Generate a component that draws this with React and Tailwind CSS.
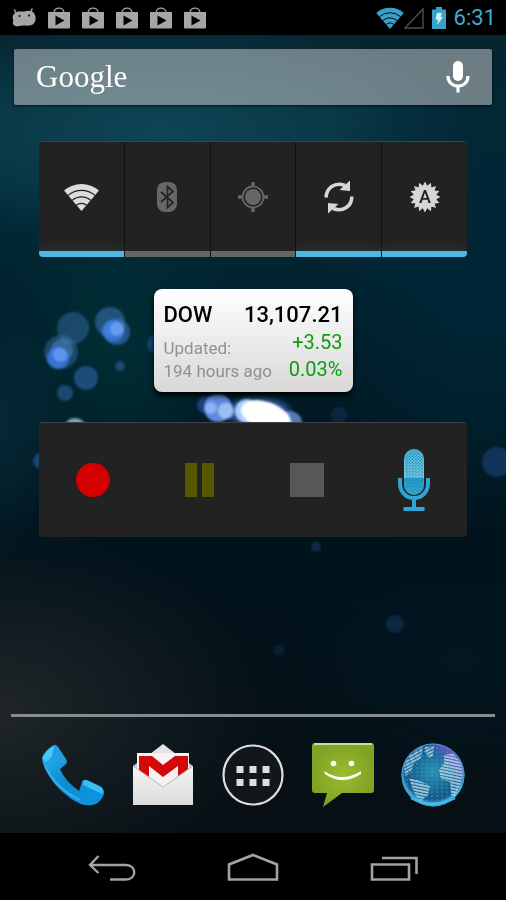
import React, { useState } from "react";

const bokeh = [
  { x: 73, y: 328, r: 16, fill: "#3f77b8", o: 0.42 },
  { x: 61, y: 352, r: 17, fill: "#4a7fbf", o: 0.38 },
  { x: 62, y: 350, r: 11, fill: "#5f9ae8", o: 0.4 },
  { x: 58, y: 358, r: 11, fill: "#3f86ff", o: 0.7 },
  { x: 60, y: 355, r: 7, fill: "#7db0ff", o: 0.5 },
  { x: 110, y: 322, r: 15, fill: "#3e73ba", o: 0.55 },
  { x: 117, y: 332, r: 13, fill: "#4a8af0", o: 0.45 },
  { x: 113, y: 331, r: 11, fill: "#4a8cff", o: 0.6 },
  { x: 117, y: 329, r: 7, fill: "#8abaff", o: 0.5 },
  { x: 86, y: 378, r: 12, fill: "#2f66ae", o: 0.6 },
  { x: 65, y: 393, r: 8, fill: "#2f66a8", o: 0.55 },
  { x: 120, y: 366, r: 5, fill: "#3a6ba5", o: 0.5 },
  { x: 75, y: 429, r: 11, fill: "#9fd0e8", o: 0.75 },
  { x: 41, y: 461, r: 8, fill: "#2a5f9c", o: 0.6 },
  { x: 157, y: 344, r: 10, fill: "#20509c", o: 0.6 },
  { x: 206, y: 405, r: 9, fill: "#4b83ff", o: 0.35 },
  { x: 218, y: 408, r: 14, fill: "#6c9cff", o: 0.85 },
  { x: 211, y: 408, r: 6, fill: "#a9c9ff", o: 0.6 },
  { x: 226, y: 411, r: 8, fill: "#b5d6ff", o: 0.7 },
  { x: 290, y: 423, r: 12, fill: "#7a9cf0", o: 0.7 },
  { x: 339, y: 415, r: 8, fill: "#1f3f7c", o: 0.35 },
  { x: 497, y: 462, r: 15, fill: "#1d4b8c", o: 0.5 },
  { x: 316, y: 547, r: 5, fill: "#27508c", o: 0.4 },
  { x: 395, y: 624, r: 9, fill: "#1e4d80", o: 0.35 },
  { x: 279, y: 650, r: 6, fill: "#1b3b60", o: 0.3 },
];

const Wallpaper = () => (
  <svg
    className="absolute inset-0 h-full w-full"
    viewBox="0 35 506 798"
    preserveAspectRatio="xMidYMid slice"
    aria-hidden="true"
  >
    <defs>
      <linearGradient id="sky" x1="0" y1="0" x2="0" y2="1">
        <stop offset="0" stopColor="#062530" />
        <stop offset="0.2" stopColor="#022a38" />
        <stop offset="0.4" stopColor="#001d29" />
        <stop offset="0.65" stopColor="#00121b" />
        <stop offset="1" stopColor="#080f14" />
      </linearGradient>
      <radialGradient id="teal">
        <stop offset="0" stopColor="#0f4555" />
        <stop offset="0.5" stopColor="#0d4252" stopOpacity="0.65" />
        <stop offset="1" stopColor="#0d4252" stopOpacity="0" />
      </radialGradient>
      <radialGradient id="green">
        <stop offset="0" stopColor="#003036" stopOpacity="0.9" />
        <stop offset="1" stopColor="#003036" stopOpacity="0" />
      </radialGradient>
      <radialGradient id="smoke">
        <stop offset="0" stopColor="#202629" />
        <stop offset="1" stopColor="#1c2327" stopOpacity="0" />
      </radialGradient>
      <radialGradient id="navy">
        <stop offset="0" stopColor="#002636" />
        <stop offset="1" stopColor="#002636" stopOpacity="0" />
      </radialGradient>
      <filter id="soft">
        <feGaussianBlur stdDeviation="1" />
      </filter>
      <filter id="glow" x="-50%" y="-50%" width="200%" height="200%">
        <feGaussianBlur stdDeviation="3" />
      </filter>
    </defs>
    <rect y="35" width="506" height="798" fill="url(#sky)" />
    <ellipse cx="160" cy="130" rx="340" ry="110" fill="url(#teal)" />
    <ellipse cx="120" cy="340" rx="120" ry="170" fill="url(#green)" />
    <ellipse cx="480" cy="280" rx="170" ry="260" fill="url(#navy)" />
    <ellipse cx="0" cy="430" rx="70" ry="130" fill="url(#teal)" opacity="0.35" />
    <ellipse cx="0" cy="710" rx="280" ry="190" fill="url(#smoke)" />
    <ellipse cx="460" cy="660" rx="200" ry="140" fill="url(#navy)" opacity="0.3" />
    <ellipse cx="258" cy="412" rx="32" ry="14" fill="#5b8bff" opacity="0.55" filter="url(#glow)" />
    <g filter="url(#soft)">
      {bokeh.map((b, i) => (
        <circle key={i} cx={b.x} cy={b.y} r={b.r} fill={b.fill} opacity={b.o} />
      ))}
      <circle cx="247" cy="411" r="12" fill="#a3d0ff" />
      <ellipse cx="266" cy="416" rx="26" ry="14" fill="#fff" transform="rotate(20 266 416)" />
    </g>
  </svg>
);

const WifiIcon = ({ className, gap }) => (
  <svg viewBox="0 0 35 28" className={className}>
    <path d="M17.500 28 0 7.500A27 27 0 0 1 35 7.500Z" fill="currentColor" />
    <g fill="none" stroke={gap} strokeWidth="1.200">
      <path d="M4 12.400A20.500 20.500 0 0 1 31 12.400" />
      <path d="M8.200 17.400A14 14 0 0 1 26.800 17.400" />
      <path d="M12.400 22.300A7.500 7.500 0 0 1 22.600 22.300" />
    </g>
  </svg>
);

const BluetoothIcon = () => (
  <svg viewBox="0 0 20 30" className="h-[30px] w-5">
    <rect width="20" height="30" rx="8" fill="#666" />
    <path
      d="M4 10 16 20.500 10.500 25.500V4.500L16 9.500 4 20"
      fill="none"
      stroke="#222"
      strokeWidth="1.700"
    />
  </svg>
);

const GpsIcon = () => (
  <svg viewBox="0 0 30 30" className="h-[30px] w-[30px]">
    <circle cx="15" cy="15" r="8" fill="#666" />
    <circle cx="15" cy="15" r="10.500" fill="none" stroke="#666" strokeWidth="1.800" />
    <path d="M15 0v5M15 25v5M0 15h5M25 15h5" stroke="#666" strokeWidth="3.500" />
  </svg>
);

const SyncIcon = () => (
  <svg viewBox="0 0 30 34" className="h-[34px] w-[30px]">
    <g fill="none" stroke="#d6d6d6" strokeWidth="3.600">
      <path d="M2.200 17.500C2 8 11 1.500 21 5.500" />
      <path d="M27.800 16.500C28 26 19 32.500 9 28.500" />
    </g>
    <path d="M26 .5V11L15.500 10Z" fill="#d6d6d6" />
    <path d="M4 33.500V23L14.500 24Z" fill="#d6d6d6" />
  </svg>
);

// 16-pointed star used behind the auto brightness letter
const starPoints = Array.from({ length: 32 }, (_, i) => {
  const r = i % 2 ? 11.5 : 15.5;
  const a = (i * Math.PI) / 16;
  return `${(16 + r * Math.sin(a)).toFixed(1)},${(16 - r * Math.cos(a)).toFixed(1)}`;
}).join(" ");

const BrightnessIcon = () => (
  <svg viewBox="0 0 32 32" className="h-8 w-8">
    <polygon points={starPoints} fill="#d6d6d6" />
    <text
      x="16"
      y="22"
      textAnchor="middle"
      fontSize="18"
      fontWeight="500"
      fill="#222"
      className="font-[Roboto,sans-serif]"
    >
      A
    </text>
  </svg>
);

const AndroidIcon = () => (
  <svg viewBox="0 0 24 19" className="h-[19px] w-6">
    <path
      d="M2.500 2 4 5M20 1l-1.500 4"
      stroke="#a6a6a6"
      strokeWidth="1.500"
      strokeLinecap="round"
    />
    <path
      d="M3 5C6 2.500 9 4 12 3.500 16 2.500 21 2 23 7c2 5.500-1 10-5 10.500-4 .5-5-.5-9 .3-3 .9-7 .7-8-1.800-.6-1.500.3-2.500.2-4C0 9.500.6 7 3 5Z"
      fill="#a6a6a6"
    />
    <circle cx="7.500" cy="8" r="1" />
    <circle cx="17" cy="7.500" r="1" />
  </svg>
);

const PlayStoreIcon = () => (
  <svg viewBox="0 0 22 22" className="h-[22px] w-[22px]">
    <path d="M6 6C6-.5 16-.5 16 6" fill="none" stroke="#a6a6a6" strokeWidth="1.300" />
    <path d="M0 5h22v15.500q0 1-1 1H1q-1 0-1-1Z" fill="#a6a6a6" />
    <path d="M7.500 8.500v10l9-5Z" fill="#000" />
  </svg>
);

const BatteryIcon = () => (
  <svg viewBox="0 0 14 22" className="h-[22px] w-[14px]">
    <path d="M0 2.500h4V0h6v2.500h4V22H0Z" fill="#3aa0c8" />
    <path d="M5 6h5l-1.500 4H11L5 18l1-5.500H3.500Z" fill="#d8f0fa" />
  </svg>
);

const MicIcon = () => (
  <svg viewBox="0 0 24 32" className="h-8 w-6">
    <rect x="7" y="0" width="10" height="20" rx="5" fill="#fff" />
    <path
      d="M2 15c0 13.500 20 13.500 20 0M12 25v6.500"
      fill="none"
      stroke="#fff"
      strokeWidth="3.200"
    />
  </svg>
);

const StudioMicIcon = () => (
  <svg viewBox="0 0 32 64" className="h-16 w-8">
    <defs>
      <pattern id="mesh" width="3" height="3" patternUnits="userSpaceOnUse">
        <circle cx="0.800" cy="0.800" r="0.600" fill="#1b6f96" />
        <circle cx="2.300" cy="2.300" r="0.600" fill="#1b6f96" />
      </pattern>
      <linearGradient id="micBody" x1="0" y1="0" x2="0" y2="1">
        <stop offset="0" stopColor="#49b5dc" />
        <stop offset="0.620" stopColor="#74cbe8" />
        <stop offset="0.630" stopColor="#1f9fd0" />
        <stop offset="1" stopColor="#35b0dc" />
      </linearGradient>
    </defs>
    <rect x="6" y="1" width="20" height="46" rx="10" fill="url(#micBody)" />
    <rect x="7" y="2" width="18" height="44" rx="9" fill="url(#mesh)" />
    <path
      d="M2 30v5C2 55 30 55 30 35v-5M16 51v9"
      fill="none"
      stroke="#2ba6d5"
      strokeWidth="4"
    />
    <path d="M5.500 61h21" stroke="#2ba6d5" strokeWidth="4" />
  </svg>
);

const PhoneIcon = () => (
  <svg viewBox="0 0 62 62" className="h-[62px] w-[62px]">
    <defs>
      <linearGradient id="phoneBlue" x1="0" y1="0" x2="1" y2="1">
        <stop offset="0" stopColor="#2fb4f0" />
        <stop offset="0.500" stopColor="#0f8cd2" />
        <stop offset="1" stopColor="#0a97e2" />
      </linearGradient>
    </defs>
    <path
      d="M0 14Q2 7 11 1.500 14 0 16 3L24 15Q26 18 24 20L18 25Q23 37 37 47L40 38Q41 35 45 36L58 42Q63 45 62 50 58 60 50 61 41 63 28 54 10 41 3 24 0 19 0 14Z"
      fill="url(#phoneBlue)"
    />
    <path d="M1 13Q4 7 12 2L14 3Q12 12 4 18Q1 17 1 13Z" fill="#4ac6f8" />
    <path d="M12 2Q14 1 16 4L24 16 20 20 10 12Z" fill="#1f9fe0" />
    <path d="M41 37 44 36 59 43Q62 46 60 50L56 48 41 41Z" fill="#3dbdf4" />
    <path d="M3 22Q13 44 38 56" fill="none" stroke="#2fb0ea" strokeWidth="2" />
  </svg>
);

const GmailIcon = () => (
  <svg viewBox="0 0 60 62" className="h-[62px] w-[60px]">
    <defs>
      <linearGradient id="paper" x1="0" y1="0" x2="0" y2="1">
        <stop offset="0" stopColor="#f4f4f4" />
        <stop offset="1" stopColor="#dcdcdc" />
      </linearGradient>
    </defs>
    <path d="M0 22 4 19H56L60 22V61H0Z" fill="#c9c9c9" />
    <path d="M17 10 30 0 43 10Z" fill="#e2e2e2" />
    <path d="M4 9h52v34H4Z" fill="#f5f3f2" />
    <path d="M6 37V12h13L30 21 42 12h13v25H45V22L30 33 16 22v15Z" fill="#d4090b" />
    <path d="M0 22 30 43 60 22V61H0Z" fill="url(#paper)" />
    <path d="M0 22 30 43 60 22" fill="none" stroke="#b9b9b9" />
  </svg>
);

const AppsIcon = () => (
  <svg viewBox="0 0 62 62" className="h-[62px] w-[62px]">
    <circle cx="31" cy="31" r="29.500" fill="#11171b" stroke="#dedede" strokeWidth="2.200" />
    {[14.5, 27.5, 40.5].map((x) => (
      <g key={x} fill="#dedede">
        <rect x={x} y="22" width="7" height="7" />
        <rect x={x} y="35" width="7" height="7" />
      </g>
    ))}
  </svg>
);

const MessagingIcon = () => (
  <svg viewBox="0 0 62 64" className="h-16 w-[62px]">
    <defs>
      <radialGradient id="lime">
        <stop offset="0" stopColor="#9bbb2f" />
        <stop offset="1" stopColor="#7fa324" />
      </radialGradient>
    </defs>
    <path
      d="M3 0h56q3 0 3 3v44q0 3-3 3H30L11 64l4-14H3q-3 0-3-3V3q0-3 3-3Z"
      fill="url(#lime)"
    />
    <path d="M2 1h58" stroke="#e6f0c4" strokeWidth="1.500" />
    <circle cx="21.500" cy="20.500" r="2.800" fill="#fff" />
    <circle cx="39.500" cy="20.500" r="2.800" fill="#fff" />
    <path d="M12 28Q30 40 49 28V31Q30 43 13 31Z" fill="#fff" />
  </svg>
);

const BrowserIcon = () => (
  <svg viewBox="0 0 64 64" className="h-16 w-16">
    <defs>
      <radialGradient id="ocean" cx="0.500" cy="0.450">
        <stop offset="0" stopColor="#2b8fb4" />
        <stop offset="0.700" stopColor="#16638f" />
        <stop offset="0.900" stopColor="#155a8d" />
        <stop offset="1" stopColor="#3daee0" />
      </radialGradient>
      <linearGradient id="purple" x1="0" y1="1" x2="1" y2="0">
        <stop offset="0.650" stopColor="#8a56d8" stopOpacity="0" />
        <stop offset="0.900" stopColor="#8a56d8" stopOpacity="0.850" />
      </linearGradient>
      <pattern id="sea" width="5" height="4" patternUnits="userSpaceOnUse">
        <path d="M0 1h2" stroke="#64bcd8" strokeWidth="0.800" opacity="0.600" />
      </pattern>
      <pattern
        id="land"
        width="6"
        height="3"
        patternUnits="userSpaceOnUse"
        patternTransform="rotate(12)"
      >
        <path d="M0 1h6" stroke="#d9f3fb" strokeWidth="1.300" />
      </pattern>
      <pattern
        id="landWest"
        width="6"
        height="3"
        patternUnits="userSpaceOnUse"
        patternTransform="rotate(-28)"
      >
        <path d="M0 1h5.500" stroke="#d9f3fb" strokeWidth="1.300" />
      </pattern>
    </defs>
    <circle cx="32" cy="32" r="31.500" fill="url(#ocean)" />
    <circle cx="32" cy="32" r="31" fill="url(#purple)" />
    <circle cx="32" cy="32" r="29" fill="url(#sea)" />
    <path d="M15 7 22 3 20 15 13 20 10 29 4 33 3 22 8 13Z" fill="url(#landWest)" />
    <path d="M24 4 33 3 32 13 28 15 23 8Z" fill="url(#landWest)" />
    <path d="M43 12 52 10 60 20 62 31 59 43 54 53 50 52 49 39 40 36 38 27 43 20Z" fill="url(#land)" />
    <path d="M8 35 19 38 29 43 27 52 20 58 14 52Z" fill="url(#land)" />
    <path d="M10 55Q32 67 54 55" fill="none" stroke="#48bdf0" strokeWidth="2.500" />
    <circle cx="32" cy="32" r="31" fill="none" stroke="#3f9ccf" strokeWidth="1" />
  </svg>
);

const toggles = [
  { label: "Wi-Fi", icon: <WifiIcon className="h-7 w-[35px] text-[#dcdcdc]" gap="#222" />, on: true },
  { label: "Bluetooth", icon: <BluetoothIcon />, on: false },
  { label: "Location", icon: <GpsIcon />, on: false },
  { label: "Sync", icon: <SyncIcon />, on: true },
  { label: "Auto brightness", icon: <BrightnessIcon />, on: true },
];

const recorder = [
  { label: "Record", icon: <span className="h-[34px] w-[34px] rounded-full bg-[#d40000]" /> },
  {
    label: "Pause",
    icon: (
      <span className="flex gap-[5px]">
        <span className="h-[34px] w-3 bg-[#575700]" />
        <span className="h-[34px] w-3 bg-[#575700]" />
      </span>
    ),
  },
  { label: "Stop", icon: <span className="h-[34px] w-[34px] bg-[#575757]" /> },
  { label: "Open recorder", icon: <StudioMicIcon /> },
];

const dock = [
  { label: "Phone", icon: <PhoneIcon /> },
  { label: "Gmail", icon: <GmailIcon /> },
  { label: "Apps", icon: <AppsIcon /> },
  { label: "Messaging", icon: <MessagingIcon /> },
  { label: "Browser", icon: <BrowserIcon /> },
];

const StatusBar = () => (
  <header className="flex h-[35px] items-center justify-between bg-black pr-[10px] pl-3">
    <div className="flex items-center gap-3">
      <AndroidIcon />
      {[0, 1, 2, 3, 4].map((i) => (
        <PlayStoreIcon key={i} />
      ))}
    </div>
    <div className="flex items-center">
      <WifiIcon className="h-[22px] w-7 text-[#3aa0c8]" gap="#000" />
      <svg viewBox="0 0 20 22" className="h-[22px] w-5">
        <path d="M1 21 19 2V21Z" fill="none" stroke="#4d4d4d" strokeWidth="1.400" />
      </svg>
      <span className="ml-2 flex">
        <BatteryIcon />
      </span>
      <span className="ml-2 text-[22px] leading-6 text-[#45a9d0]">6:31</span>
    </div>
  </header>
);

const SearchBar = () => (
  <div className="mx-[14px] mt-[14px] flex h-14 items-center justify-between rounded-xs bg-[#d3d3d3]/50 px-[22px] shadow-sm shadow-black/60">
    <button
      type="button"
      className="flex-1 text-left font-['Liberation_Serif',serif] text-[31px] leading-10 text-white"
    >
      Google
    </button>
    <button type="button" aria-label="Voice search">
      <MicIcon />
    </button>
  </div>
);

const PowerControl = () => {
  const [on, setOn] = useState(toggles.map((t) => t.on));
  const flip = (i) => setOn((s) => s.map((v, n) => (n === i ? !v : v)));

  return (
    <div className="mx-[39px] mt-9 grid h-[116px] grid-cols-5 gap-px overflow-hidden rounded-sm border-t border-[#3a4548] bg-[#111]">
      {toggles.map((t, i) => (
        <button
          key={t.label}
          type="button"
          aria-label={t.label}
          aria-pressed={on[i]}
          onClick={() => flip(i)}
          className="flex flex-col bg-[#222]"
        >
          <span className="flex w-full flex-1 items-center justify-center">{t.icon}</span>
          <span
            className={`h-[6px] w-full ${
              on[i] ? "bg-[#4db8e2] shadow-[0_-3px_8px_#4db8e226]" : "bg-[#666]"
            }`}
          />
        </button>
      ))}
    </div>
  );
};

const StockCard = () => (
  <div className="mx-auto mt-8 flex h-[103px] w-[199px] flex-col rounded-lg bg-linear-to-b from-white to-[#d8d8d8] px-[10px] pt-3 shadow-md shadow-black">
    <div className="flex justify-between text-[22px] leading-7 font-medium text-black">
      <span>DOW</span>
      <span>13,107.21</span>
    </div>
    <div className="flex justify-between whitespace-nowrap">
      <div className="pt-2 text-[17px] leading-[23px] text-[#919191]">
        <p>Updated:</p>
        <p>194 hours ago</p>
      </div>
      <div className="text-right text-xl leading-[27px] text-[#0b9f0b]">
        <p>+3.53</p>
        <p>0.03%</p>
      </div>
    </div>
  </div>
);

const Recorder = () => (
  <div className="mx-[39px] mt-[30px] grid h-[115px] grid-cols-4 rounded-sm border-t border-[#3e4244] bg-[#222]">
    {recorder.map((r) => (
      <button
        key={r.label}
        type="button"
        aria-label={r.label}
        className="flex items-center justify-center"
      >
        {r.icon}
      </button>
    ))}
  </div>
);

const Dock = () => (
  <div className="mt-auto">
    <div className="mx-[11px] h-[3px] bg-[#858d91]" />
    <div className="grid h-[116px] grid-cols-5 px-7">
      {dock.map((d) => (
        <button
          key={d.label}
          type="button"
          aria-label={d.label}
          className="flex items-center justify-center"
        >
          {d.icon}
        </button>
      ))}
    </div>
  </div>
);

const NavBar = () => (
  <nav className="grid h-[67px] grid-cols-3 bg-black px-[42px]">
    <button type="button" aria-label="Back" className="flex items-center justify-center">
      <svg viewBox="0 0 48 28" className="h-7 w-12" fill="none" stroke="#a3a3a3" strokeWidth="2.400">
        <path d="M10.500 3 2 12l8.500 8M2 12h36c11 0 11 14.500 0 14.500H22" />
      </svg>
    </button>
    <button type="button" aria-label="Home" className="flex items-center justify-center">
      <svg viewBox="0 0 52 28" className="h-7 w-[52px]" fill="none" stroke="#a3a3a3" strokeWidth="2.600">
        <path d="M2 26.500V11.500L26 2l24 9.500V26.500Z" />
      </svg>
    </button>
    <button type="button" aria-label="Recent apps" className="flex items-center justify-center">
      <svg viewBox="0 0 48 28" className="h-7 w-12" fill="none" stroke="#a3a3a3" strokeWidth="2.600">
        <path d="M2 11.500h37v15H2ZM12 5h34.500v16" />
      </svg>
    </button>
  </nav>
);

export default function App() {
  return (
    <div className="flex min-h-screen flex-col bg-black font-[Roboto,sans-serif]">
      <StatusBar />
      <main className="relative flex flex-1 flex-col">
        <Wallpaper />
        <div className="relative flex flex-1 flex-col">
          <SearchBar />
          <PowerControl />
          <StockCard />
          <Recorder />
          <Dock />
        </div>
      </main>
      <NavBar />
    </div>
  );
}
